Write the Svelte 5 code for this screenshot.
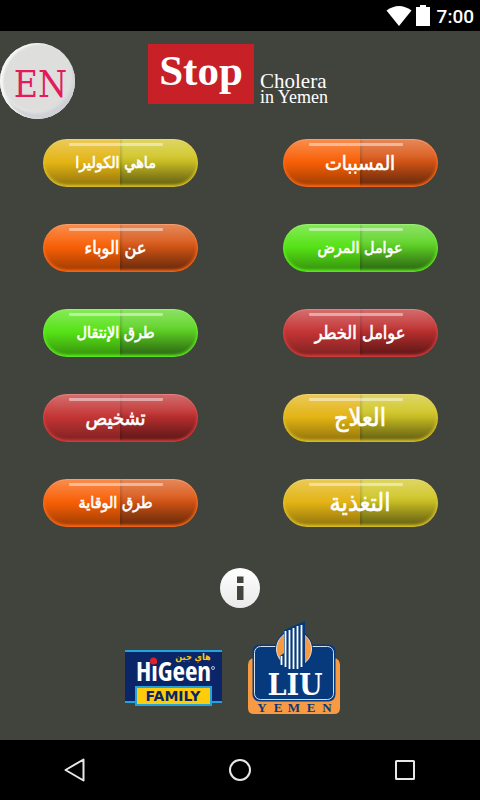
<script>
  const topics = [
    { label: 'ماهي الكوليرا', color: 'yellow', size: 'small' },
    { label: 'المسببات', color: 'orange', size: 'medium' },
    { label: 'عن الوباء', color: 'orange', size: 'regular' },
    { label: 'عوامل المرض', color: 'green', size: 'small' },
    { label: 'طرق الإنتقال', color: 'green', size: 'small' },
    { label: 'عوامل الخطر', color: 'red', size: 'regular' },
    { label: 'تشخيص', color: 'red', size: 'medium' },
    { label: 'العلاج', color: 'yellow', size: 'large' },
    { label: 'طرق الوقاية', color: 'orange', size: 'small' },
    { label: 'التغذية', color: 'yellow', size: 'large' }
  ];
</script>

<div class="screen">
  <div class="status">
    <svg width="26" height="20" viewBox="0 0 26 20" aria-hidden="true">
      <path d="M0.5 4.5Q13-4.5 25.5 4.5L13 20Z" fill="#fff" />
    </svg>
    <svg width="14" height="21" viewBox="0 0 14 21" aria-hidden="true">
      <path d="M4 0h6v2h4v19H0V2h4Z" fill="#fff" />
    </svg>
    <span>7:00</span>
  </div>

  <main>
    <header>
      <div class="side"><button class="lang">EN</button></div>
      <h1>
        <span class="stop">Stop</span>
        <span class="name"><span class="cholera">Cholera</span><span class="place">in Yemen</span></span>
      </h1>
      <div class="side"></div>
    </header>

    <div class="topics">
      {#each topics as topic}
        <button class="pill {topic.color}" lang="ar" dir="rtl">
          <span class={topic.size}>{topic.label}</span>
        </button>
      {/each}
    </div>

    <button class="info" aria-label="Information">
      <svg width="40" height="40" viewBox="0 0 40 40" aria-hidden="true">
        <defs>
          <linearGradient id="disc" x1="0" y1="0" x2="0" y2="1">
            <stop offset="0" stop-color="#fff" />
            <stop offset="1" stop-color="#e9e9e9" />
          </linearGradient>
        </defs>
        <circle cx="20" cy="20" r="20" fill="url(#disc)" />
        <path d="M17 8.500h6.500v6.500h-6.500ZM17 18h6.500v14h-6.500Z" fill="#41443c" />
      </svg>
    </button>

    <div class="sponsors">
      <svg width="97" height="56" viewBox="0 0 97 56" role="img" aria-label="HiGeen Family">
        <rect x="0" y="0" width="97" height="53" fill="#23a3dc" />
        <rect x="0" y="2" width="97" height="49" fill="#0a2668" />
        <rect x="10" y="36" width="77" height="20" fill="#23a3dc" />
        <rect x="12" y="38" width="73" height="16" fill="#ffcc0b" />
        <text x="11" y="31" class="higeen">HiGeen</text>
        <circle cx="28.500" cy="11" r="3.500" fill="#e11f26" />
        <circle cx="88" cy="18" r="1.500" fill="none" stroke="#fff" stroke-width="0.700" />
        <text x="68" y="10" class="arabic" text-anchor="middle">هاي جين</text>
        <text x="48" y="51" class="family" text-anchor="middle">FAMILY</text>
      </svg>

      <svg width="94" height="95" viewBox="0 0 94 95" role="img" aria-label="LIU Yemen">
        <path d="M7 38H87Q93 39 93 45V88Q93 94 87 94H7Q1 94 1 88V45Q1 39 7 38Z" fill="#f79a42" />
        <rect x="5.500" y="24.500" width="83" height="57" rx="7" fill="#063a7c" />
        <rect x="7.500" y="26.500" width="79" height="53" rx="6" fill="#063a7c" stroke="#d5e0ee" stroke-width="1" />
        <circle cx="47" cy="29" r="19" fill="#063a7c" />
        <circle cx="47" cy="29" r="17.500" fill="#f79a42" stroke="#e6dcd0" stroke-width="1" />
        <path d="M37 10 58 1V47Q46 52 34 46L33 36 37 33Z" fill="#063a7c" />
        <path d="M34.500 36v9M38.500 11v36M42.500 10v39M46.500 8v41M50.500 6v43M54.500 5v42" stroke="#fff" stroke-width="1.800" fill="none" />
        <text x="48" y="75" class="liu" text-anchor="middle">LIU</text>
        <g class="yemen" text-anchor="middle">
          <text x="15" y="92">Y</text><text x="31" y="92">E</text><text x="47" y="92">M</text><text x="64" y="92">E</text><text x="80" y="92">N</text>
        </g>
      </svg>
    </div>
  </main>

  <nav>
    <button aria-label="Back">
      <svg width="24" height="24" viewBox="0 0 24 24"><path d="M20.500 1.500v21L2.500 12Z" /></svg>
    </button>
    <button aria-label="Home">
      <svg width="24" height="24" viewBox="0 0 24 24"><circle cx="12" cy="12" r="10" /></svg>
    </button>
    <button aria-label="Overview">
      <svg width="24" height="24" viewBox="0 0 24 24"><rect x="3" y="3" width="18" height="18" rx="0.500" /></svg>
    </button>
  </nav>
</div>

<style>
  :global(body) {
    margin: 0;
    background: #000;
  }
  button {
    border: 0;
    padding: 0;
    background: none;
    color: inherit;
    cursor: pointer;
  }
  svg {
    display: block;
    flex: none;
  }
  .screen {
    min-height: 100vh;
    display: flex;
    flex-direction: column;
  }
  .status {
    height: 31px;
    box-sizing: border-box;
    padding-right: 6px;
    display: flex;
    align-items: center;
    justify-content: flex-end;
    gap: 4px;
    background: #000;
    color: #fff;
    font: 500 19px/24px Roboto, sans-serif;
  }
  .status span {
    margin-left: 3px;
    padding-top: 2px;
  }
  main {
    flex: 1;
    display: flex;
    flex-direction: column;
    align-items: center;
    background: #41443c;
  }
  header {
    width: 100%;
    display: flex;
    align-items: flex-start;
    padding: 12px 0 20px;
  }
  .side {
    flex: 1;
  }
  .lang {
    width: 75px;
    height: 76px;
    box-sizing: border-box;
    border-radius: 50%;
    padding-top: 7px;
    padding-left: 6px;
    background: #dedfdd;
    box-shadow: inset 3px 1px 2px #f6f6f6, inset -2px -6px 3px #d0d1d5, inset 0 -7px 2px #e8e8ec;
    color: #e21c5c;
    font: 37px/44px "DejaVu Serif Condensed", "DejaVu Serif", serif;
  }
  h1 {
    margin: 0;
    display: flex;
    align-items: flex-end;
    gap: 6px;
    padding-top: 1px;
    color: #fff;
    font-family: "Liberation Serif", serif;
  }
  .stop {
    width: 106px;
    height: 60px;
    box-sizing: border-box;
    padding-top: 3px;
    background: #c72027;
    text-align: center;
    font-size: 43px;
    line-height: 48px;
    font-weight: 700;
  }
  .name {
    width: 72px;
    font-weight: 400;
    white-space: nowrap;
  }
  .name span {
    display: block;
  }
  .cholera {
    font-size: 21px;
    line-height: 18px;
  }
  .place {
    font-size: 18px;
    line-height: 14px;
  }
  .topics {
    width: 100%;
    display: grid;
    grid-template-columns: 1fr 1fr;
    justify-items: center;
    row-gap: 37px;
  }
  .pill {
    --left: #f85f05;
    --right: #d95716;
    --edge: #ff6a18;
    position: relative;
    width: 155px;
    height: 48px;
    box-sizing: border-box;
    border-radius: 24px;
    display: flex;
    align-items: center;
    justify-content: center;
    background:
      linear-gradient(rgba(255, 255, 255, 0.3), rgba(255, 255, 255, 0) 48%, rgba(0, 0, 0, 0.3) 90%),
      linear-gradient(90deg, transparent 50%, rgba(0, 0, 0, 0.15) 50%, transparent 52%),
      linear-gradient(transparent 35%, rgba(0, 0, 0, 0.22) 90%) right / 50% 100% no-repeat,
      linear-gradient(90deg, var(--left) 50%, var(--right) 50%);
    box-shadow: inset 0 -1px 3px 1px var(--edge), inset 0 1px 1px rgba(255, 255, 255, 0.45);
    color: #fff;
    font-family: "DejaVu Sans Condensed", "DejaVu Sans", sans-serif;
    white-space: nowrap;
    -webkit-text-stroke: 0.6px #fff;
  }
  .pill:nth-child(odd) {
    padding-right: 9px;
  }
  .pill::before {
    content: "";
    position: absolute;
    top: 4px;
    left: 26px;
    right: 35px;
    height: 3px;
    border-radius: 1px;
    background: rgba(255, 255, 255, 0.45);
  }
  .yellow {
    --left: #e3b414;
    --right: #d0c525;
    --edge: #dcc427;
  }
  .green {
    --left: #55e215;
    --right: #5ed425;
    --edge: #5cf21d;
  }
  .red {
    --left: #c43434;
    --right: #c03030;
    --edge: #dc3d3d;
  }
  .pill span {
    line-height: 24px;
  }
  .small {
    font-size: 16px;
  }
  .regular {
    font-size: 18px;
  }
  .medium {
    font-size: 20px;
  }
  .large {
    font-size: 25px;
  }
  .info {
    margin-top: 41px;
    border-radius: 50%;
  }
  .sponsors {
    display: flex;
    align-items: flex-end;
    gap: 25px;
    padding: 12px 14px 25px 0;
  }
  .sponsors svg:first-child {
    margin-bottom: 9px;
  }
  .higeen {
    font: 700 27px "Liberation Sans Narrow", "Open Sans Condensed", "Liberation Sans", sans-serif;
    fill: #fff;
  }
  .arabic {
    font: 700 9px "DejaVu Sans Condensed", "DejaVu Sans", sans-serif;
    fill: #ffcc0b;
  }
  .family {
    font: 700 14px "DejaVu Sans", sans-serif;
    fill: #0a2668;
  }
  .liu {
    font: 700 30px "DejaVu Serif Condensed", "DejaVu Serif", serif;
    fill: #fff;
  }
  .yemen {
    font: 700 13px "Liberation Serif", serif;
    fill: #063a7c;
  }
  nav {
    height: 60px;
    padding: 0 63px;
    display: flex;
    align-items: center;
    justify-content: space-between;
    background: #000;
  }
  nav svg {
    fill: none;
    stroke: #e8e8e8;
    stroke-width: 2;
    stroke-linejoin: round;
  }
</style>
